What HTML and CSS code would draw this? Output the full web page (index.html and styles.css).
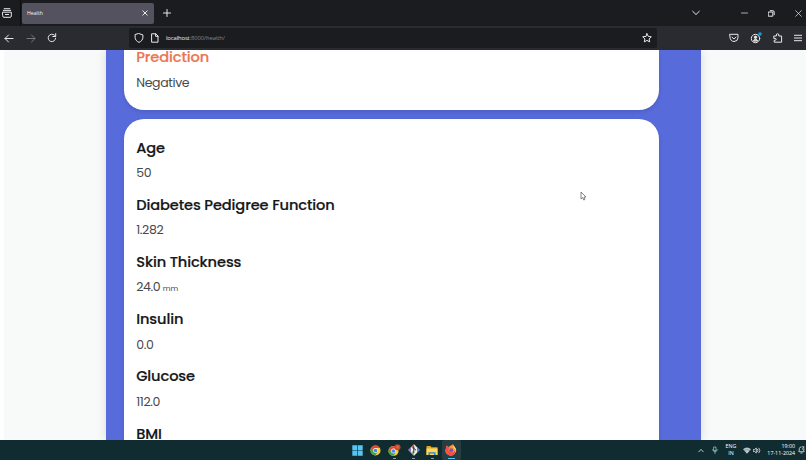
FILE: index.html
```html
<!DOCTYPE html>
<html lang="en">
<head>
<meta charset="utf-8">
<title>Health</title>
<link rel="stylesheet" href="styles.css">
</head>
<body>
<div class="screen">
  <header class="tabs">
    <div class="view"><svg class="ic" width="10" height="10" viewBox="0 0 10 10"><path d="M2.200.7h5.600M1.300 2.400h7.400M.7 4.200h8.600v3.900q0 1.200-1.200 1.200H1.900Q.7 9.300.7 8.100zM3.400 6.500h3.200"/></svg></div>
    <div class="tab"><span>Health</span><svg class="ic" width="6" height="6" viewBox="0 0 6 6"><path d="M.8.800l4.400 4.400M5.200.8L.8 5.200"/></svg></div>
    <svg class="ic plus" width="8" height="8" viewBox="0 0 8 8"><path d="M4 .5v7M.5 4h7"/></svg>
    <div class="window">
      <svg class="ic" width="8" height="6" viewBox="0 0 8 6"><path d="M.7 1.300L4 4.500l3.300-3.200"/></svg>
      <svg class="ic thin" width="7" height="6" viewBox="0 0 7 6"><path d="M.5 3h6"/></svg>
      <svg class="ic" width="7" height="7" viewBox="0 0 7 7"><path d="M.6 2h4.200v4.200H.6zM2.300.7h2.500q1.400 0 1.400 1.400v2.600"/></svg>
      <svg class="ic thin" width="7" height="7" viewBox="0 0 7 7"><path d="M.7.7l5.600 5.600M6.300.7L.7 6.300"/></svg>
    </div>
  </header>
  <nav class="nav">
    <div class="moves">
      <svg class="ic" width="10" height="9" viewBox="0 0 10 9"><path d="M9 4.500H1M4.500 1L1 4.500 4.500 8"/></svg>
      <svg class="ic dim" width="10" height="9" viewBox="0 0 10 9"><path d="M1 4.500h8M5.500 1L9 4.500 5.500 8"/></svg>
      <svg class="ic" width="10" height="10" viewBox="0 0 10 10"><path d="M8.600 5.200a3.700 3.700 0 1 1-1.200-3L8.500 3.200M8.700.6v2.900H5.800"/></svg>
    </div>
    <div class="url">
      <svg class="ic" width="10" height="10" viewBox="0 0 10 10"><path d="M5 .6l3.900 1.300v2.300c0 2.400-1.500 4.200-3.900 5.200-2.400-1-3.900-2.800-3.900-5.200V1.900z"/></svg>
      <svg class="ic" width="8" height="10" viewBox="0 0 8 10"><path d="M1 .8h3.800L7 3v6.200H1zM4.600.8v2.500H7"/></svg>
      <span class="addr"><b>localhost</b>:8000/health/</span>
      <svg class="ic star" width="10" height="10" viewBox="0 0 10 10"><path d="M5 .7l1.300 2.700 3 .4-2.200 2.100.6 3L5 7.400 2.300 8.900l.6-3L.7 3.800l3-.4z"/></svg>
    </div>
    <div class="tools">
      <svg class="ic" width="10" height="10" viewBox="0 0 10 10"><path d="M1 1.300h8v3.200a4 4 0 0 1-8 0zM3 4.100L5 6l2-1.900"/></svg>
      <svg class="ic" width="12" height="12" viewBox="0 0 12 12"><circle cx="5.500" cy="6.500" r="4.200"/><circle cx="5.500" cy="5.300" r="1.200" fill="#eee"/><path d="M3.500 8.700q0-1.300 2-1.300t2 1.300z" fill="#eee"/><circle cx="10" cy="2" r="1.800" fill="#0b9fe8" stroke="none"/></svg>
      <svg class="ic" width="10" height="10" viewBox="0 0 10 10"><path d="M1.200 3H3.400V2q0-1.300 1.200-1.300T5.800 2v1h2.800v6.200H1.200V7.200h1q1 0 1-.9t-1-.9h-1z"/></svg>
      <svg class="ic" width="8" height="8" viewBox="0 0 8 8"><path d="M.3 1.300h7.400M.3 4h7.400M.3 6.700h7.400"/></svg>
    </div>
  </nav>
  <main class="page">
    <div class="panel">
      <section class="card result">
        <div class="item"><h2>Prediction</h2><p>Negative</p></div>
      </section>
      <section class="card details">
        <div class="item"><h2>Age</h2><p>50</p></div>
        <div class="item"><h2>Diabetes Pedigree Function</h2><p>1.282</p></div>
        <div class="item"><h2>Skin Thickness</h2><p>24.0 <small>mm</small></p></div>
        <div class="item"><h2>Insulin</h2><p>0.0</p></div>
        <div class="item"><h2>Glucose</h2><p>112.0</p></div>
        <div class="item"><h2>BMI</h2></div>
      </section>
    </div>
  </main>
  <footer class="taskbar">
    <div class="apps">
      <span class="app"><svg width="11" height="11" viewBox="0 0 11 11"><path fill="#55c5f5" d="M.3.300h4.900v4.900H.3zM5.800.300h4.900v4.900H5.800zM.3 5.800h4.900v4.900H.3zM5.800 5.800h4.900v4.900H5.800z"/></svg></span>
      <span class="app"><svg width="11" height="11" viewBox="0 0 22 22"><circle cx="11" cy="11" r="10" fill="#fc3"/><path fill="#e74335" d="M2.300 6A10 10 0 0 1 19.700 6H11l-4.300 7.500z"/><path fill="#34a853" d="M2.300 6a10 10 0 0 0 8.700 15l4.300-7.500H6.700z"/><circle cx="11" cy="11" r="4.800" fill="#fff"/><circle cx="11" cy="11" r="3.700" fill="#4285f4"/></svg></span>
      <span class="app open"><svg width="13" height="13" viewBox="0 0 26 26"><g transform="translate(0 3)"><circle cx="11" cy="11" r="10" fill="#fc3"/><path fill="#e74335" d="M2.300 6A10 10 0 0 1 19.700 6H11l-4.300 7.500z"/><path fill="#34a853" d="M2.300 6a10 10 0 0 0 8.700 15l4.300-7.500H6.700z"/><circle cx="11" cy="11" r="4.800" fill="#fff"/><circle cx="11" cy="11" r="3.700" fill="#4285f4"/></g><circle cx="19" cy="6.500" r="6" fill="#c64a32"/><path d="M17 8l3-4v5" stroke="#dc9480" stroke-width="1.200" fill="none"/></svg></span>
      <span class="app open"><svg width="12" height="12" viewBox="0 0 12 12"><path fill="#e9eded" d="M6 .3L11.700 6 6 11.700.3 6z"/><path fill="#e95846" d="M6 .3L3.300 3l2.400 2.500L6 6z"/><path fill="#4b86d8" d="M9 3.300L11.700 6 9 8.700z"/><path fill="#86b755" d="M6 11.700l-3-3 3-2.200z"/><path fill="#8c75c4" d="M3 3.300L.3 6 3 8.700z"/><path d="M5.800 2.500v6.500M5.800 4.200L8 6.300" stroke="#283136" fill="none"/></svg></span>
      <span class="app open"><svg width="12" height="11" viewBox="0 0 12 11"><path fill="#e5a522" d="M.5 1h4l1 1.200h6v7.800H.5z"/><path fill="#ffd75d" d="M.5 3.500h11V10H.5z"/><path fill="#2583ce" d="M2.500 10V7.300h7V10H8V8.500H4V10z"/></svg></span>
      <span class="app open active"><svg width="12" height="12" viewBox="0 0 12 12"><path fill="#ff9833" d="M6 1.500L8 .3q.3 1.500 1.800 2.600A5.300 5.300 0 1 1 1 4L1.700 1.500 3.300 3z"/><path fill="#f34c49" d="M1 4l.7-2.500L3.200 3 5 3.700 3.400 5.200q.2 3.200 3.300 3.200 2.500 0 3.500-2Q10.500 11.500 6 11.600.2 11.200 1 4z"/><path fill="#ffdc4a" d="M8 .3q.3 1.500 1.800 2.600 2 2.300 1 5.100Q10.500 5 8.200 3.500z"/><circle cx="6.200" cy="6.300" r="2" fill="#8250bd"/></svg></span>
    </div>
    <div class="tray">
      <svg class="ic" width="6" height="5" viewBox="0 0 6 5"><path d="M.8 3.800L3 1.400l2.200 2.400"/></svg>
      <svg class="ic mic" width="6" height="8" viewBox="0 0 6 8"><path d="M2 1h2v3.500H2zM.7 3.500Q.7 5.700 3 5.700t2.300-2.200M3 5.700v2"/></svg>
      <span class="lang">ENG<br>IN</span>
      <svg width="8" height="7" viewBox="0 0 8 7"><path fill="#b9c6c8" d="M0 2.200Q4-1 8 2.200L4 6.800z"/><path d="M1 3.600Q4 1.300 7 3.600" fill="none" stroke="#60777a" stroke-width=".5"/></svg>
      <svg class="ic spk" width="8" height="7" viewBox="0 0 8 7"><path d="M.6 2.500h1L3.300 1v5L1.600 4.500h-1zM4.600 2.300q.9 1.200 0 2.400M6 1.200q2 2.300 0 4.600"/></svg>
      <span class="clock">19:00<br>17-11-2024</span>
      <svg class="ic bell" width="7" height="8" viewBox="0 0 7 8"><path d="M3 1Q1.500 1 1.300 2.500V4L.8 5.700h5.400L5.700 4.500M2.800 7h1.400M4.300.8h1.900L4.400 3.200h1.900"/></svg>
    </div>
  </footer>
  <svg class="cursor" width="7" height="10" viewBox="0 0 7 10"><path d="M1 1v7l1.700-1.500L3.700 9l1.200-.5L4 6.100l2-.1z" fill="#fff" stroke="#666" stroke-width=".8"/></svg>
</div>
</body>
</html>
```
FILE: styles.css
```css
* { box-sizing: border-box; }
body { margin: 0; font-family: Poppins, Inter, sans-serif; }
svg { display: block; flex: none; }
.screen { position: relative; width: 806px; height: 460px; display: flex; flex-direction: column; overflow: hidden; background: #fff; }
.ic { fill: none; stroke: #e8e8ea; stroke-width: 1; stroke-linecap: round; stroke-linejoin: round; }
.thin { stroke-width: .7; }
.dim { stroke: #77777d; }

.tabs { height: 26px; flex: none; background: #1b1c20; display: flex; align-items: center; }
.view { width: 21px; height: 26px; padding: 8px 0 0 2px; border-right: 1px solid #0c0c10; }
.tab { width: 132px; height: 21px; margin-left: 1px; padding: 0 6px 0 5px; border-radius: 2px; background: #53525e; display: flex; align-items: center; justify-content: space-between; color: #f4f4f6; font: 5.200px "Open Sans", sans-serif; }
.plus { margin-left: 9px; }
.window { margin-left: auto; padding-right: 4px; display: flex; align-items: center; }
.window svg:nth-child(2) { margin-left: 41px; }
.window svg:nth-child(3) { margin-left: 20px; }
.window svg:nth-child(4) { margin-left: 20px; }

.nav { height: 24px; flex: none; background: #2a2b30; display: flex; align-items: center; }
.moves { width: 129px; padding-left: 4px; display: flex; align-items: center; gap: 11.500px; }
.url { width: 528px; height: 20px; padding: 0 5px; border-radius: 2px; background: #1b1c20; display: flex; align-items: center; }
.url svg:nth-child(2) { margin-left: 7px; }
.addr { margin-left: 7px; color: #85868c; font: 5.900px "Open Sans", sans-serif; letter-spacing: -.12px; }
.addr b { font-weight: 400; color: #eee; }
.star { margin-left: auto; }
.tools { margin-left: auto; padding-right: 4px; display: flex; align-items: center; gap: 11px; }

.page { height: 390px; flex: none; overflow: hidden; background: #f8faf9; border-left: 4px solid #fff; padding-left: 102.400px; }
.panel { width: 594.500px; height: 390px; background: #576bdb; padding-left: 18px; box-shadow: 0 0 10px rgba(0, 0, 0, .13); }
.card { width: 534.500px; background: #fff; padding-left: 11.800px; box-shadow: 0 2px 4px rgba(0, 0, 0, .1); }
.result { height: 59.500px; padding-top: .1px; border-radius: 0 0 20px 20px; }
.result .item { margin-top: -2.700px; }
.result h2 { color: #ee7550; }
.details { height: 400px; margin-top: 9.400px; padding-top: 18.800px; border-radius: 20px 20px 0 0; }
.item { height: 57.200px; }
h2 { margin: 0; height: 20px; line-height: 20px; font-size: 14.600px; font-weight: 500; color: #15171a; letter-spacing: -.1px; -webkit-text-stroke: .2px; white-space: nowrap; }
p { margin: 6.300px 0 0; height: 18px; line-height: 18px; font-size: 12.500px; font-weight: 400; color: #46484d; letter-spacing: -.35px; }
small { font-size: 7.500px; margin-left: -.5px; letter-spacing: 0; }

.taskbar { height: 20px; flex: none; background: #112c31; display: flex; align-items: center; }
.apps { margin-left: 347.800px; display: flex; height: 20px; }
.app { width: 18.800px; height: 20px; display: flex; align-items: center; justify-content: center; position: relative; }
.open::after { content: ""; position: absolute; bottom: 1px; width: 3px; height: 1px; background: #8fa1a4; }
.active { background: #263e43; border-radius: 2px; }
.active::after { width: 7px; background: #58c2ed; }
.tray { margin-left: auto; padding-right: 3px; display: flex; align-items: center; color: #fff; font: 5.300px/7px "Open Sans", sans-serif; }
.tray .ic { stroke-width: .8; }
.tray .mic { margin-left: 8px; stroke: #8dbdbc; }
.lang { width: 14px; margin: 0 5px 0 6px; text-align: center; }
.spk { margin-left: 2px; }
.clock { width: 30px; margin: 0 3px 0 4px; text-align: right; white-space: nowrap; }
.bell { margin-right: -2px; }
.cursor { position: absolute; left: 579.500px; top: 191px; }
```
